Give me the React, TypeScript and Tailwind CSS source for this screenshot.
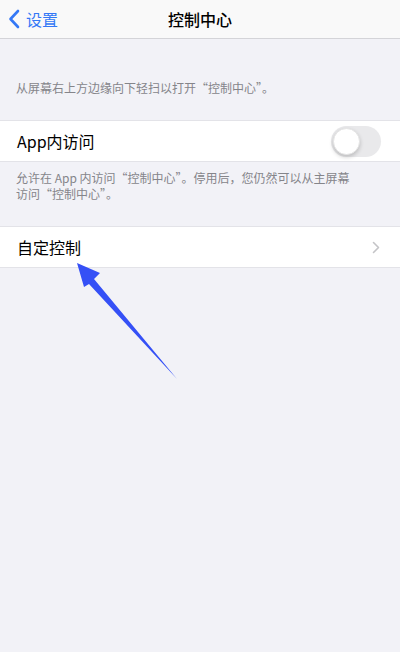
import React from 'react';

export default function App() {
    return (
        <div
            className="relative w-[400px] min-h-[652px] bg-[#f2f2f7] overflow-hidden"
            style={{ fontFamily: '"Noto Sans CJK SC", "Noto Sans", sans-serif' }}
        >
            {/* Nav bar */}
            <div className="relative h-[39px] bg-[#f9f9f9] border-b border-[#d4d4d8] flex items-center">
                <div className="flex items-center pl-[8px] text-[#3478f6]">
                    <svg width="12" height="20" viewBox="0 0 12 20" fill="none">
                        <path d="M10 2 L2.5 10 L10 18" stroke="#3478f6" strokeWidth="2.6" strokeLinecap="round" strokeLinejoin="round" />
                    </svg>
                    <span className="ml-[6px] text-[16px] leading-none">设置</span>
                </div>
                <div className="absolute left-0 right-0 text-center text-[16px] font-medium text-black leading-none pointer-events-none">
                    控制中心
                </div>
            </div>

            {/* Header description */}
            <div className="pt-[41px] pb-[24px] px-[16px] text-[12px] leading-[16px] text-[#85858a]">
                从屏幕右上方边缘向下轻扫以打开“控制中心”。
            </div>

            {/* App内访问 */}
            <div className="h-[42px] bg-white border-y border-[#e3e3e8] flex items-center justify-between pl-[17px] pr-[19px]">
                <span className="text-[16px] text-black">App内访问</span>
                <div className="w-[50px] h-[31px] rounded-full bg-[#e9e9eb] p-[2px] flex items-center">
                    <div className="w-[27px] h-[27px] rounded-full bg-white shadow-[0_2px_4px_rgba(0,0,0,0.2)] border border-[#e5e5e5]" />
                </div>
            </div>

            {/* Footer description */}
            <div className="pt-[8px] pb-[24px] px-[16px] text-[12px] leading-[16px] text-[#85858a]">
                <p>允许在 App 内访问“控制中心”。停用后，您仍然可以从主屏幕</p>
                <p>访问“控制中心”。</p>
            </div>

            {/* 自定控制 */}
            <div className="h-[42px] bg-white border-y border-[#e3e3e8] flex items-center justify-between pl-[17px] pr-[20px]">
                <span className="text-[16px] text-black">自定控制</span>
                <svg width="8" height="13" viewBox="0 0 8 13" fill="none">
                    <path d="M1.5 1.5 L6.5 6.5 L1.5 11.5" stroke="#c4c4c7" strokeWidth="1.6" strokeLinecap="round" strokeLinejoin="round" />
                </svg>
            </div>

            {/* Annotation arrow */}
            <svg className="absolute left-0 top-0 pointer-events-none" width="400" height="652" viewBox="0 0 400 652">
                <polygon
                    points="77,263 100,273 94,279 177,379 89,284 84,287"
                    fill="#3550f6"
                />
            </svg>
        </div>
    );
}
